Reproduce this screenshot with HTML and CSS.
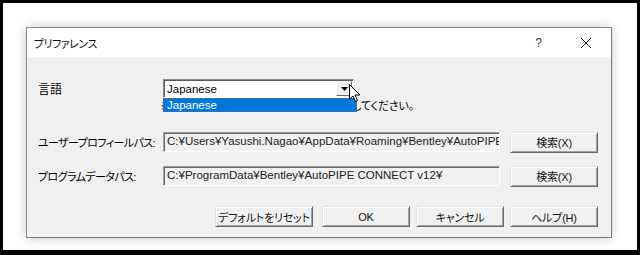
FILE: index.html
```html
<!DOCTYPE html>
<html lang="ja">
<head>
    <meta charset="UTF-8">
    <title>プリファレンス</title>
    <link rel="stylesheet" href="styles.css">
</head>
<body>
    <div class="frame">
        <div class="dialog">
            <div class="titlebar">
                <span class="title">プリファレンス</span>
                <span class="help">?</span>
                <svg class="close" width="12" height="12" viewBox="0 0 12 12">
                    <path d="M1 1 L11 11 M11 1 L1 11" stroke="#222" stroke-width="1" fill="none"/>
                </svg>
            </div>

            <div class="body">
                <div class="row lang-row">
                    <label class="label">言語</label>
                    <div class="combo">
                        <span class="combo-text">Japanese</span>
                        <span class="combo-btn">
                            <svg width="7" height="4" viewBox="0 0 7 4"><path d="M0 0 H7 L3.5 4 Z" fill="#000"/></svg>
                        </span>
                        <div class="droplist">Japanese</div>
                        <svg class="cursor" width="12" height="19" viewBox="0 0 12 19">
                            <path d="M0.5 0.5 V15.5 L4 12 L6.5 17.5 L8.5 16.5 L6 11 H11 Z" fill="#fff" stroke="#000" stroke-width="1"/>
                        </svg>
                    </div>
                </div>
                <div class="hint">※アプリケーションを再起動し変更を確認してください。</div>

                <div class="row path-row">
                    <label class="label">ユーザープロフィールパス:</label>
                    <div class="field">C:¥Users¥Yasushi.Nagao¥AppData¥Roaming¥Bentley¥AutoPIPE CONNECT v12¥</div>
                    <button class="btn">検索(X)</button>
                </div>

                <div class="row path-row">
                    <label class="label">プログラムデータパス:</label>
                    <div class="field">C:¥ProgramData¥Bentley¥AutoPIPE CONNECT v12¥</div>
                    <button class="btn">検索(X)</button>
                </div>

                <div class="actions">
                    <button class="btn btn-reset">デフォルトをリセット</button>
                    <button class="btn">OK</button>
                    <button class="btn">キャンセル</button>
                    <button class="btn">ヘルプ(H)</button>
                </div>
            </div>
        </div>
    </div>
</body>
</html>
```

FILE: styles.css
```css
* {
    box-sizing: border-box;
}
body {
    margin: 0;
    background: #000;
    font-family: "Liberation Sans", "Noto Sans CJK JP", sans-serif;
    font-size: 11.5px;
    font-feature-settings: "palt";
    color: #000;
}
.frame {
    width: 640px;
    height: 255px;
    border: 3px solid #000;
    border-bottom-width: 5px;
    background: #fff;
    padding: 24px 0 0 23px;
}
.dialog {
    width: 586px;
    height: 211px;
    border: 1px solid #8a8a8a;
    border-right-color: #7a7a7a;
    border-bottom-color: #7a7a7a;
    box-shadow: 0 0 10px rgba(0,0,0,0.22);
    background: #f0f0f0;
    display: flex;
    flex-direction: column;
}
.titlebar {
    height: 29px;
    background: #fff;
    display: flex;
    align-items: center;
    padding: 0 0 0 7px;
}
.title {
    font-size: 11px;
    letter-spacing: -0.5px;
    color: #111;
    flex: 1;
}
.help {
    font-size: 12px;
    color: #333;
    margin-right: 38px;
}
.close {
    margin-right: 19px;
}
.body {
    flex: 1;
    padding: 22px 13px 0 11px;
}
.row {
    display: flex;
    align-items: center;
}
.label {
    width: 125px;
    flex: none;
    white-space: nowrap;
    font-size: 11px;
    letter-spacing: -0.6px;
}
.lang-row {
    height: 19px;
}
.lang-row .label {
    font-size: 12px;
    letter-spacing: 0;
}
.combo {
    position: relative;
    width: 191px;
    height: 19px;
    background: #fff;
    border: 1px solid;
    border-color: #8c8c8c #fff #fff #8c8c8c;
    box-shadow: inset 1px 1px #5a5a5a, 1px 1px #e0e0e0;
    display: flex;
    align-items: center;
    padding-left: 3px;
}
.combo-text {
    flex: 1;
}
.combo-btn {
    width: 16px;
    height: 15px;
    margin-right: 1px;
    background: #f0f0f0;
    border: 1px solid;
    border-color: #fff #696969 #696969 #fff;
    display: flex;
    align-items: center;
    justify-content: center;
}
.droplist {
    position: absolute;
    left: -1px;
    top: 18px;
    width: 194px;
    height: 14px;
    background: #0078d7;
    color: #fff;
    border: 1px solid #3a6ea5;
    line-height: 12px;
    padding-left: 3px;
    z-index: 2;
}
.cursor {
    position: absolute;
    left: 185px;
    top: 4px;
    z-index: 3;
}
.hint {
    margin: 1px 0 0 122px;
    height: 14px;
    line-height: 14px;
    font-size: 11px;
    letter-spacing: -0.2px;
    white-space: nowrap;
}
.path-row {
    height: 20px;
    margin-top: 19px;
}
.path-row + .path-row {
    margin-top: 14px;
}
.field {
    width: 338px;
    height: 20px;
    margin-right: 10px;
    border: 1px solid;
    border-color: #a0a0a0 #fff #fff #a0a0a0;
    box-shadow: inset 1px 1px #696969;
    padding: 2px 3px 0;
    white-space: nowrap;
    overflow: hidden;
    color: #222;
}
.btn {
    width: 88px;
    height: 21px;
    background: #f0f0f0;
    font: inherit;
    font-size: 11px;
    letter-spacing: -0.2px;
    white-space: nowrap;
    color: #111;
    border: 1px solid;
    border-color: #e3e3e3 #696969 #696969 #e3e3e3;
    box-shadow: inset 1px 1px #fff, inset -1px -1px #a0a0a0;
    padding: 0;
}
.actions {
    display: flex;
    justify-content: flex-end;
    gap: 6px;
    margin-top: 20px;
}
.btn-reset {
    width: 98px;
    margin-right: 3px;
}
```
